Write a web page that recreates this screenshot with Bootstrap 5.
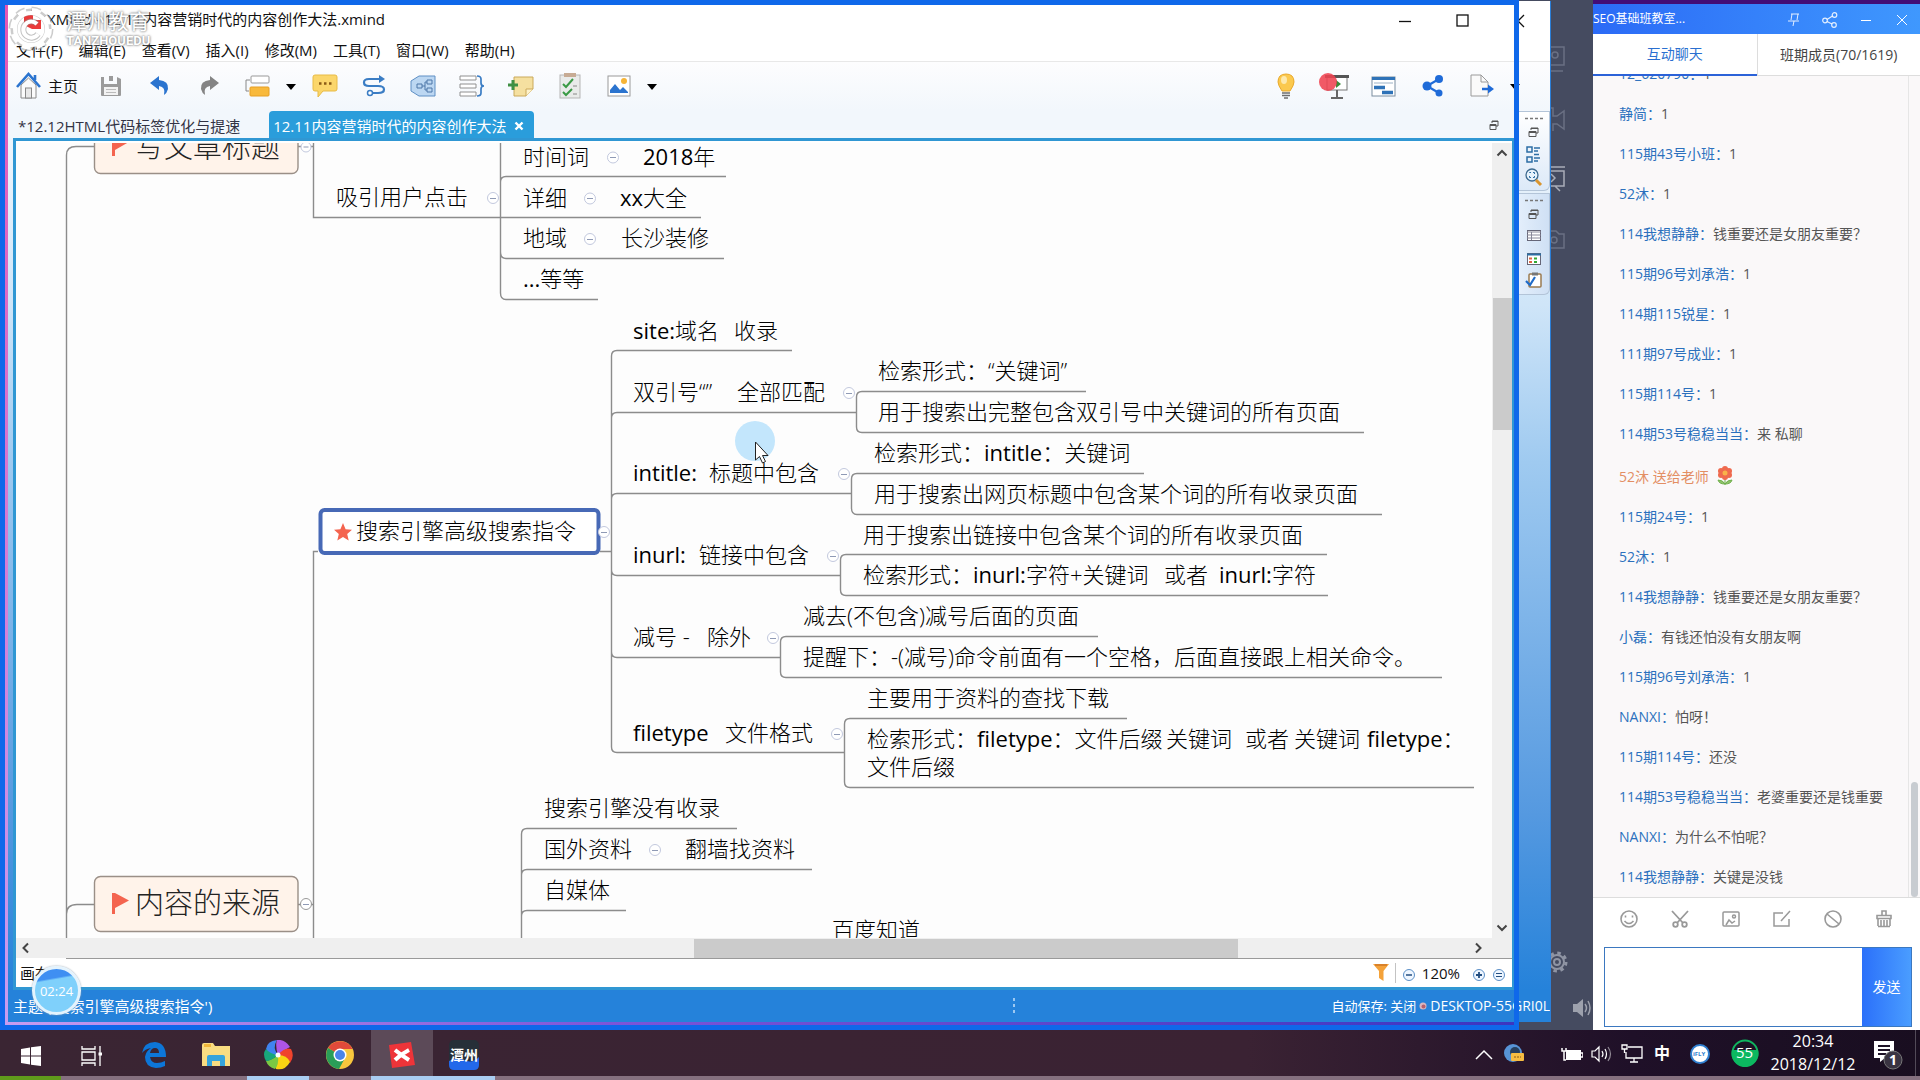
<!DOCTYPE html>
<html lang="zh-CN">
<head>
<meta charset="utf-8">
<meta name="viewport" content="width=device-width, initial-scale=1">
<title>XMind - 12.11内容营销时代的内容创作大法.xmind</title>
<link href="https://cdn.jsdelivr.net/npm/bootstrap@5.3.0/dist/css/bootstrap.min.css" rel="stylesheet">
<style>
:root{--ui:"Open Sans","Noto Sans CJK SC",sans-serif;--rec:#0f68ea;--frame:#3097d3}
body{font-family:var(--ui);font-size:15px;line-height:20px;color:#111;background:#454b60}
button,textarea{font-family:inherit}
.desk{height:100vh;overflow:hidden}
.fill-y{min-height:0}
.fill-x{min-width:0}
.plain{border:0;background:none;padding:0;color:inherit;font-size:inherit;line-height:inherit}
/* mind map window */
.xm-wrap{min-width:0;padding:1px 0 8px 8px}
.xm-win{background:#fff;border-right:1px solid #2b7fd8}
.xm-title,.xm-menu,.xm-tools,.xm-tabs,.hbar,.sheet,.xm-status,.chat-head,.chat-tabs,.chat-tools,.chat-send,.taskbar{flex:none}
.xm-title{height:38px;padding-left:39px;padding-bottom:2px}
.xm-wc{width:58px;height:36px}
.xm-menu{height:23px;padding-left:8px;gap:16px;border-bottom:1px solid #e8e8e8}
.xm-tools{height:49px;padding:0 26px 2px 8px;background:linear-gradient(#fdfdfe,#f2f7fc)}
.tool{width:49px;height:40px}
.tool-home{width:70px;gap:6px}
.tool-drop{width:18px;height:40px}
.xm-body{background:linear-gradient(#f3f8fd 0,#cfe5f8 22%,#9fcaf0 40%,#5599e0 80%,#2582da 100%)}
.xm-left{padding:0 4px 0 5px;min-width:0}
.xm-tabs{height:27px;background:#f2f7fc;margin-left:-5px;padding-left:10px}
.xm-tab{height:27px;padding-top:2px;color:#334;text-decoration:none}
.xm-tab.on{background:#2a9ddb;color:#fff;padding-right:10px;padding-left:4px;margin-left:29px;border-radius:4px 4px 0 0}
.xm-edit{border:3px solid var(--frame);background:#fff;padding-top:2px}
.canvas-box{overflow:hidden;background:#fdfdfd}
.canvas-box svg{display:block}
.vbar{width:20px;background:#efefef}
.vbar-thumb{height:132px;margin-top:135px;background:#cbcbcb;width:19px}
.hbar{height:20px;background:#efefef}
.hbar-thumb{width:544px;height:19px;background:#cbcbcb;margin-left:44%}
.sheet{height:29px}
.sheet-tab{width:50px;padding-left:4px}
.sheet-rest{border-top:1px solid #9a9a9a;gap:6px;padding-right:6px}
.zoom-value{margin-right:6px}
.xm-side{width:31px}
.trim{border:1px solid #b3c4d8;border-left:0;border-radius:0 0 6px 0;background:linear-gradient(90deg,#e3eefb,#cfe0f4);width:31px;margin-bottom:2px}
.trim svg{display:block}
.trim-a{height:80px;background:linear-gradient(#fff,#dce9f8)}
.trim-b{height:102px}
.xm-status{height:32px;background:#2582da;color:#fff;padding-left:5px}
.status-l{width:65%}
.status-r{font-size:13px;gap:3px}
.status-host{font-size:14px}
.rec-frame{inset:0 32px 0 0;border:5px solid var(--rec);pointer-events:none}
.rec-frame::before{content:"";position:absolute;left:0;top:0;bottom:0;width:3px;background:linear-gradient(#e457b4,#c79cf0)}
.rec-frame::after{content:"";position:absolute;left:0;right:0;bottom:0;height:3px;background:linear-gradient(90deg,#c79cf0,#7d55d8 40%,#3c35c0)}
.mark-logo{left:8px;top:5px}
.mark-text{left:66px;top:8px;color:#fff;text-shadow:0 0 2px #777,0 0 3px #999}
.mark-cn{font-size:21px;line-height:26px}
.mark-en{font-size:13px;line-height:14px;font-family:Roboto,sans-serif;font-weight:700}
.timer{left:32px;top:966px;width:49px;height:49px;border:3px solid #e4f3fd;border-radius:50%;color:#fff;font-size:13px;background:linear-gradient(170deg,#3f8ff2 0 24%,#7fd0fb 28% 100%);box-shadow:0 0 2px #89a}
/* mind map drawing */
.topic{font-size:22px;fill:#000;font-weight:300}
.topic-main{font-size:29px;fill:#222}
.topic .latin{font-weight:400}
.wire{fill:none;stroke:#8c8c8c;stroke-width:1.4}
.cap{fill:#fff3ea;stroke:#9a8f87;stroke-width:1.4}
/* classroom sidebar strip */
.strip{width:42px;background:#454b60}
.strip svg{display:block}
/* chat */
.chat{width:327px;background:#fff;border-top:4px solid #420d76}
.chat-head{height:30px;background:linear-gradient(90deg,#2b6af6,#3f98fe);color:#fff;font-size:12px}
.chat-head .plain{width:36px;height:30px}
.chat-tabs{height:42px;font-size:14px;border-bottom:1px solid #ddd}
.chat-tabs a{color:#444;text-decoration:none;border-left:1px solid #ddd}
.chat-tabs a.on{color:#2a6fd0;border-left:0;border-bottom:2px solid #2b62d8;height:42px}
.chat-list{flex:1 1 0;background:#faf8f9;font-size:14px;overflow:hidden}
.chat-msgs{padding-left:26px;overflow:hidden}
.msg{height:40px;line-height:40px;white-space:nowrap;flex:none;color:#555}
.msg b{font-weight:400;color:#2b70bd}
.msg-gift{height:43px;color:#e38e63}
.msg-gift svg{margin-left:8px}
.chat-bar{width:12px;border-left:1px solid #e6e6e6;padding:0 2px}
.chat-bar div{width:7px;height:115px;border-radius:4px;background:#c8ccd1}
.chat-tools{height:50px;padding:0 11px;border-top:1px solid #ddd}
.chat-tools .plain{width:51px;height:40px}
.chat-send{margin:0 8px 3px 11px;height:80px;border:1px solid #3b78c0}
.chat-send textarea{border:0;resize:none;outline:0}
.chat-send .plain{width:49px;color:#fff;font-size:14px;background:linear-gradient(90deg,#2b70fa,#4a9dff)}
/* taskbar */
.taskbar{height:50px;background:linear-gradient(90deg,#3a2533 0,#3a2233 65%,#1f1028 85%,#190e20 100%);box-shadow:inset 0 -4px #85707f}
.tb{width:62px;height:50px}
.tb.run{box-shadow:inset 0 -4px #a9cdf2}
.tb.act{background:#5c4a58}
.tb.first{width:61px;box-shadow:inset 0 -4px #5f9a1b}
.tray{color:#fff;font-size:16px;line-height:23px;padding-bottom:4px}
.tray .plain{height:46px}
.w30{width:30px}
.clock{width:92px}
.tray-end{width:4px}
</style>
</head>
<body>
<div class="desk d-flex flex-column">
<div class="d-flex flex-grow-1 fill-y">

<div class="xm-wrap position-relative flex-grow-1 d-flex flex-column">
<div class="xm-win flex-grow-1 d-flex flex-column overflow-hidden">
  <div class="xm-title d-flex align-items-center">
    <span class="me-auto text-nowrap">XMind - 12.11内容营销时代的内容创作大法.xmind</span>
    <button class="plain xm-wc" aria-label="最小化"><svg width="12" height="12"><path d="M0 6.5H12" stroke="#111" stroke-width="1.3"/></svg></button>
    <button class="plain xm-wc" aria-label="最大化"><svg width="14" height="14"><rect x="1" y="1" width="11" height="11" fill="none" stroke="#111" stroke-width="1.3"/></svg></button>
    <button class="plain xm-wc text-end pe-4" aria-label="关闭"><svg width="12" height="14"><path d="M10 1L4 7L10 13M4 7H0" fill="none" stroke="#111" stroke-width="1.3"/></svg></button>
  </div>
  <div class="xm-menu d-flex align-items-center text-nowrap">
    <button class="plain">文件(F)</button><button class="plain">编辑(E)</button><button class="plain">查看(V)</button><button class="plain">插入(I)</button><button class="plain">修改(M)</button><button class="plain">工具(T)</button><button class="plain">窗口(W)</button><button class="plain">帮助(H)</button>
  </div>
  <div class="xm-tools d-flex align-items-center">
    <button class="plain tool-home d-flex align-items-center text-nowrap"><svg width="26" height="28" viewBox="0 0 26 28"><path d="M5 13V26H20V13L12.500 6Z" fill="#fbfbfb" stroke="#8a8a8a"/><path d="M1 15L12.500 2L24 15M19 3V8" fill="none" stroke="#2b74cf" stroke-width="2.600"/><rect x="9.500" y="16" width="6" height="10" fill="#e8e8e8" stroke="#8a8a8a"/></svg>主页</button>
    <button class="plain tool" aria-label="保存"><svg width="22" height="22" viewBox="0 0 22 22"><path d="M1 2H4V9H17V2L21 4V20Q21 21 20 21H2Q1 21 1 20Z" fill="#9b9b9b"/><rect x="9" y="1" width="4" height="5" fill="#9b9b9b"/><rect x="4" y="12" width="14" height="8" fill="#f2f2f2"/><path d="M6 14.500H16M6 17.500H16" stroke="#bbb"/></svg></button>
    <button class="plain tool" aria-label="撤销"><svg width="20" height="20" viewBox="0 0 20 20"><path d="M0 7L9 0V4Q19 5 18 13Q17 17 14 19Q16 11 9 10V14Z" fill="#2b74cf"/></svg></button>
    <button class="plain tool" aria-label="重做"><svg width="20" height="20" viewBox="0 0 20 20"><path d="M20 7L11 0V4Q1 5 2 13Q3 17 6 19Q4 11 11 10V14Z" fill="#848484"/></svg></button>
    <button class="plain tool" aria-label="主题"><svg width="26" height="22" viewBox="0 0 26 22"><rect x="6" y="1" width="18" height="7" rx="1" fill="#fff" stroke="#999"/><path d="M5 5H1V16H4" fill="none" stroke="#888"/><rect x="5" y="12" width="19" height="9" rx="1" fill="#f8b93c" stroke="#e69f25"/></svg></button>
    <button class="plain tool-drop" aria-label="更多主题"><svg width="10" height="6"><path d="M0 0H10L5 6Z"/></svg></button>
    <button class="plain tool" aria-label="备注标签"><svg width="26" height="24" viewBox="0 0 26 24"><path d="M3 1H23Q25 1 25 3V15Q25 17 23 17H11L6 23V17H3Q1 17 1 15V3Q1 1 3 1Z" fill="#fbd66b" stroke="#e8bb46"/><path d="M7 9.500H9.500M12 9.500H14.500M17 9.500H19.500" stroke="#8a5a16" stroke-width="2.500"/></svg></button>
    <button class="plain tool" aria-label="联系"><svg width="24" height="22" viewBox="0 0 24 22"><path d="M20 4H7Q2 4 2 7.500Q2 11 7 11H16Q22 11 22 14.500Q22 18 16 18H10" fill="none" stroke="#3b7dc4" stroke-width="2.200"/><path d="M17 0L23 4L17 8Z" fill="#3b7dc4"/><circle cx="8" cy="18" r="2.500" fill="#fff" stroke="#3b7dc4" stroke-width="1.500"/></svg></button>
    <button class="plain tool" aria-label="外框"><svg width="26" height="22" viewBox="0 0 26 22"><path d="M9 1H25V21H9L1 16V6Z" fill="#bcd7f2" stroke="#5e8fc4"/><path d="M7 9H12V13H7ZM17 5H22V9H17ZM17 13H22V17H17ZM12 11H15V7H17M15 11V15H17" fill="none" stroke="#4c77a8"/></svg></button>
    <button class="plain tool" aria-label="概要"><svg width="26" height="22" viewBox="0 0 26 22"><path d="M1 1H17V5H1ZM1 9H17V13H1ZM1 17H17V21H1Z" fill="#fff" stroke="#909090"/><path d="M18 1Q22 1 22 4V8Q22 11 25 11Q22 11 22 14V18Q22 21 18 21" fill="none" stroke="#3b7dc4" stroke-width="1.700"/></svg></button>
    <button class="plain tool" aria-label="备注"><svg width="26" height="22" viewBox="0 0 26 22"><path d="M6 2H25V14L18 21H6Z" fill="#f5e0a0" stroke="#caa95a"/><path d="M25 14H18V21" fill="#fff3cc" stroke="#caa95a"/><path d="M5 5V15M0 10H10" stroke="#3f8f43" stroke-width="3"/></svg></button>
    <button class="plain tool" aria-label="任务"><svg width="22" height="26" viewBox="0 0 22 26"><rect x="1" y="2" width="20" height="23" fill="#e9ebea" stroke="#b5b5b5"/><rect x="5" y="0" width="12" height="4" fill="#c7ab94"/><path d="M4 11L7 14L14 6M4 19L7 22L13 16" fill="none" stroke="#3a9a45" stroke-width="2"/><path d="M14 13H18M14 21H18" stroke="#888"/></svg></button>
    <button class="plain tool" aria-label="图片"><svg width="24" height="22" viewBox="0 0 24 22"><rect x="1" y="1" width="22" height="20" fill="#fff" stroke="#9a9a9a"/><path d="M3 18V15L8 9L13 15L16 12L21 17V18Z" fill="#2b74cf"/><circle cx="17" cy="6" r="3" fill="#f6b436"/></svg></button>
    <button class="plain tool-drop me-auto" aria-label="更多图片"><svg width="10" height="6"><path d="M0 0H10L5 6Z"/></svg></button>
    <button class="plain tool" aria-label="头脑风暴"><svg width="20" height="26" viewBox="0 0 20 26"><path d="M10 1Q18 1 18 9Q18 12 14 18H6Q2 12 2 9Q2 1 10 1Z" fill="#fbc94e" stroke="#e9a92c"/><ellipse cx="8" cy="7" rx="3" ry="4" fill="#fde9ad"/><path d="M6 20H14M6 22.500H14M8 25H12" stroke="#6d6d6d" stroke-width="1.600"/></svg></button>
    <button class="plain tool" aria-label="演示"><svg width="32" height="28" viewBox="0 0 32 28"><rect x="8" y="5" width="20" height="13" fill="#fff" stroke="#777"/><path d="M6 4.500H30" stroke="#555" stroke-width="3"/><path d="M18 18V25M12 26H24" stroke="#666" stroke-width="2"/><path d="M17 8L22 12L17 16Z" fill="#3a8a3a"/><ellipse cx="9" cy="10" rx="9" ry="9" fill="#ef4351" fill-opacity=".88"/></svg></button>
    <button class="plain tool" aria-label="甘特图"><svg width="25" height="21" viewBox="0 0 25 21"><rect x="1" y="1" width="23" height="19" fill="#fff" stroke="#7a8ea0"/><path d="M1 2.500H24" stroke="#2f73b8" stroke-width="3"/><path d="M3 7H22" stroke="#9cb2c6"/><path d="M3 11.500H14M11 16.500H22" stroke="#2f73b8" stroke-width="3.500"/></svg></button>
    <button class="plain tool" aria-label="分享"><svg width="22" height="22" viewBox="0 0 22 22"><path d="M17 4L5 11L17 18" fill="none" stroke="#1f6bd8" stroke-width="2.200"/><circle cx="17" cy="4" r="4" fill="#1f6bd8"/><circle cx="5" cy="11" r="4.500" fill="#1f6bd8"/><circle cx="17" cy="18" r="3.500" fill="#1f6bd8"/></svg></button>
    <button class="plain tool" aria-label="导出"><svg width="26" height="24" viewBox="0 0 26 24"><path d="M2 1H12L19 8V22H2Z" fill="#fafafa" stroke="#9a9a9a"/><path d="M12 1V8H19" fill="none" stroke="#9a9a9a"/><path d="M13 15H20" stroke="#1f6bd8" stroke-width="2.500"/><path d="M19 10.500L25 15L19 19.500Z" fill="#1f6bd8"/></svg></button>
    <button class="plain tool-drop" aria-label="更多导出"><svg width="10" height="6"><path d="M0 0H10L5 6Z"/></svg></button>
  </div>
  <div class="xm-body flex-grow-1 d-flex fill-y">
    <div class="xm-left flex-grow-1 d-flex flex-column">
      <nav class="xm-tabs d-flex align-items-center text-nowrap">
        <a href="#" class="xm-tab d-flex align-items-center">*12.12HTML代码标签优化与提速</a>
        <a href="#" class="xm-tab on d-flex align-items-center gap-2">12.11内容营销时代的内容创作大法<svg width="10" height="10"><path d="M1.500 1.500L8.500 8.500M8.500 1.500L1.500 8.500" stroke="#fff" stroke-width="2.400"/></svg></a>
        <svg class="ms-auto me-3" width="10" height="10"><path d="M3 3V1H9V6H7M1 4.500H7V9.500H1ZM1 5.500H7M3 1.500H9" fill="none" stroke="#555"/></svg>
      </nav>
      <div class="xm-edit flex-grow-1 d-flex flex-column overflow-hidden">
        <div class="d-flex flex-grow-1 fill-y">
          <div class="canvas-box flex-grow-1 fill-x">
<svg width="1475" height="795" viewBox="16 143 1475 795" role="img" aria-label="思维导图">
<g class="wire">
<path d="M66.500 938V155Q66.500 146.500 76 146.500H94M66.500 914Q66.500 904.500 77 904.500H94"/>
<path d="M298 146.500H313.500M313.500 143V217.500H701M298 904.500H313.500M600 551.500H611.500M318 551.500H313.500V938"/>
<path d="M500.500 143V293Q500.500 299.500 506 299.500H598M500.500 182Q500.500 176.500 506 176.500H726M500.500 252Q500.500 258.500 506 258.500H724"/>
<path d="M792 350.500H617Q611.500 350.500 611.500 356V747Q611.500 752.500 617 752.500H844M611.500 418Q611.500 412.500 617 412.500H856M611.500 499Q611.500 493.500 617 493.500H851M611.500 570Q611.500 575.500 617 575.500H840M611.500 652Q611.500 657.500 617 657.500H780"/>
<path d="M1086 391.500H862Q856.500 391.500 856.500 397V427Q856.500 432.500 862 432.500H1364"/>
<path d="M1144 473.500H857Q851.500 473.500 851.500 479V508Q851.500 514.500 857 514.500H1382"/>
<path d="M1327 554.500H846Q840.500 554.500 840.500 560V590Q840.500 595.500 846 595.500H1328"/>
<path d="M1098 636.500H786Q780.500 636.500 780.500 642V672Q780.500 677.500 786 677.500H1442"/>
<path d="M1127 718.500H850Q844.500 718.500 844.500 724V782Q844.500 787.500 850 787.500H1474"/>
<path d="M737 828.500H527Q521.500 828.500 521.500 834V938M521.500 875Q521.500 869.500 527 869.500H812M521.500 916Q521.500 910.500 527 910.500H626"/>
</g>
<rect class="cap" x="94.500" y="118" width="203.500" height="55.500" rx="6"/>
<rect class="cap" x="94.500" y="876.500" width="203.500" height="55" rx="6"/>
<g fill="#f4644f"><path d="M112 135H115V156H112ZM115 135L128 142.500L115 150Z"/><path d="M112 893H115V914H112ZM115 893L129 900.500L115 908Z"/></g>
<g class="topic topic-main"><text x="135" y="158">写文章标题</text><text x="135" y="914">内容的来源</text></g>
<rect x="320.500" y="510" width="278" height="43" rx="4" fill="#fff" stroke="#4769b6" stroke-width="4"/>
<path d="M343 523L345.600 529.300L352 529.800L347.200 534L348.700 540.500L343 537L337.300 540.500L338.800 534L334 529.800L340.400 529.300Z" fill="#f4644f"/>
<g fill="#fff" stroke="#c3c9de">
<circle cx="306" cy="147" r="5"/><circle cx="493" cy="198" r="5.500"/><circle cx="613" cy="157.500" r="5.500"/><circle cx="590" cy="198.500" r="5.500"/><circle cx="590" cy="239" r="5.500"/><circle cx="849" cy="393" r="5.500"/><circle cx="844" cy="474" r="5.500"/><circle cx="833" cy="556" r="5.500"/><circle cx="773" cy="638" r="5.500"/><circle cx="837" cy="734" r="5.500"/><circle cx="604" cy="532" r="5.500"/><circle cx="655" cy="850" r="5.500"/><circle cx="306" cy="904" r="5.500" stroke="#999"/>
<path stroke="#8f9ab5" d="M303.500 147H308.500M490 198.500H496M610 157.500H616M587 198.500H593M587 239.500H593M846 393.500H852M841 474.500H847M830 556.500H836M770 638.500H776M834 734.500H840M601 532.500H607M652 850.500H658M303 904.500H309"/>
</g>
<circle cx="755" cy="441" r="20" fill="#c3e6fc"/>
<g class="topic">
<text x="336" y="205">吸引用户点击</text>
<text x="523" y="165">时间词</text><text x="643" y="165"><tspan class="latin">2018</tspan>年</text>
<text x="523" y="206">详细</text><text x="620" y="206"><tspan class="latin">xx</tspan>大全</text>
<text x="523" y="246">地域</text><text x="621" y="246">长沙装修</text>
<text x="523" y="287"><tspan class="latin">...</tspan>等等</text>
<text x="356" y="539">搜索引擎高级搜索指令</text>
<text x="633" y="339"><tspan class="latin">site:</tspan>域名</text><text x="734" y="339">收录</text>
<text x="633" y="400">双引号“”</text><text x="737" y="400">全部匹配</text>
<text x="633" y="481" class="latin">intitle:</text><text x="709" y="481">标题中包含</text>
<text x="633" y="563" class="latin">inurl:</text><text x="699" y="563">链接中包含</text>
<text x="633" y="645">减号 -</text><text x="707" y="645">除外</text>
<text x="633" y="741" class="latin">filetype</text><text x="725" y="741">文件格式</text>
<text x="878" y="379">检索形式：“关键词”</text><text x="878" y="420">用于搜索出完整包含双引号中关键词的所有页面</text>
<text x="874" y="461">检索形式：<tspan class="latin">intitle</tspan>：关键词</text><text x="874" y="502">用于搜索出网页标题中包含某个词的所有收录页面</text>
<text x="863" y="543">用于搜索出链接中包含某个词的所有收录页面</text>
<text x="863" y="583">检索形式：<tspan class="latin">inurl:</tspan>字符+关键词</text><text x="1164" y="583">或者</text><text x="1219" y="583"><tspan class="latin">inurl:</tspan>字符</text>
<text x="803" y="624">减去(不包含)减号后面的页面</text><text x="803" y="665">提醒下：-(减号)命令前面有一个空格，后面直接跟上相关命令。</text>
<text x="867" y="706">主要用于资料的查找下载</text>
<text x="867" y="747">检索形式：<tspan class="latin">filetype</tspan>：文件后缀</text><text x="1166" y="747">关键词</text><text x="1245" y="747">或者</text><text x="1294" y="747">关键词</text><text x="1367" y="747"><tspan class="latin">filetype</tspan>：</text><text x="867" y="775">文件后缀</text>
<text x="544" y="816">搜索引擎没有收录</text><text x="544" y="857">国外资料</text><text x="685" y="857">翻墙找资料</text><text x="544" y="898">自媒体</text><text x="832" y="938">百度知道</text>
</g>
<path d="M755.500 442V460L759.500 456.500L762.500 463L765.500 461.500L762.500 455.500H768Z" fill="#fff" stroke="#222"/>
</svg>
          </div>
          <div class="vbar d-flex flex-column align-items-end">
            <svg width="20" height="20"><path d="M5.500 12.500L10 8L14.500 12.500" fill="none" stroke="#444" stroke-width="2"/></svg>
            <div class="vbar-thumb mb-auto"></div>
            <svg width="20" height="20"><path d="M5.500 7.500L10 12L14.500 7.500" fill="none" stroke="#444" stroke-width="2"/></svg>
          </div>
        </div>
        <div class="hbar d-flex align-items-center">
          <svg width="20" height="20"><path d="M12 5.500L7.500 10L12 14.500" fill="none" stroke="#444" stroke-width="2"/></svg>
          <div class="hbar-thumb"></div>
          <svg class="ms-auto me-4" width="20" height="20"><path d="M8 5.500L12.500 10L8 14.500" fill="none" stroke="#444" stroke-width="2"/></svg>
        </div>
        <div class="sheet d-flex">
          <button class="plain sheet-tab text-start text-nowrap">画布 1</button>
          <div class="sheet-rest flex-grow-1 d-flex align-items-center justify-content-end">
            <svg width="16" height="20" viewBox="0 0 16 20"><path d="M0 1H16L10.500 8V18L6 15V8Z" fill="#f4a23a"/><path d="M2 2H14" stroke="#d9822a" stroke-width="2"/></svg>
            <div class="vr my-1"></div>
            <button class="plain" aria-label="缩小"><svg width="14" height="14"><circle cx="7" cy="7" r="5.500" fill="#eef6ff" stroke="#5b8fc7"/><path d="M4 7H10" stroke="#234e80" stroke-width="1.500"/></svg></button>
            <span class="zoom-value">120%</span>
            <button class="plain" aria-label="放大"><svg width="14" height="14"><circle cx="7" cy="7" r="5.500" fill="#eef6ff" stroke="#5b8fc7"/><path d="M4 7H10M7 4V10" stroke="#234e80" stroke-width="1.800"/></svg></button>
            <button class="plain" aria-label="适合大小"><svg width="14" height="14"><circle cx="7" cy="7" r="5.500" fill="#eef6ff" stroke="#5b8fc7"/><path d="M4 5.500H10M4 8.500H10" stroke="#234e80"/></svg></button>
          </div>
        </div>
      </div>
    </div>
    <div class="xm-side">
      <div class="trim trim-a"><svg width="28" height="78" viewBox="0 0 28 78"><path d="M6 6.500H24" stroke="#777" stroke-width="1.500" stroke-dasharray="3 2"/><path d="M12 18V16H19V21H17M10 19.500H17V24.500H10ZM10 20.500H17M12 16.500H19" fill="none" stroke="#555"/><path d="M8 35H13V40H8ZM8 45H13V50H8ZM15 36H21M15 39H19M15 46H21M15 49H19M15 42.500H20" fill="none" stroke="#2d6ea5" stroke-width="1.500"/><circle cx="13" cy="63" r="6" fill="#e6f2fc" stroke="#3d6a8f" stroke-width="1.300"/><path d="M10.500 61V60.500H12M14 60.500H15.500V62M10.500 64V65.500H12M14 65.500H15.500V64" fill="none" stroke="#2d6ea5"/><path d="M17 68L22 73" stroke="#d9952f" stroke-width="3"/></svg></div>
      <div class="trim trim-b"><svg width="28" height="100" viewBox="0 0 28 100"><path d="M6 6.500H24" stroke="#777" stroke-width="1.500" stroke-dasharray="3 2"/><path d="M12 18V16H19V21H17M10 19.500H17V24.500H10ZM10 20.500H17M12 16.500H19" fill="none" stroke="#555"/><rect x="8.500" y="36.500" width="13" height="10" fill="#fff" stroke="#667"/><path d="M8 38H22M8 41H22M8 44H22M12.500 38V46" stroke="#889"/><rect x="8.500" y="59.500" width="13" height="11" fill="#fff" stroke="#667"/><path d="M8 60.500H22" stroke="#2d6ea5" stroke-width="2"/><path d="M10 64.500H13M10 68H13" stroke="#d64" stroke-width="2"/><path d="M15 64.500H18M15 68H18" stroke="#3a3" stroke-width="2"/><rect x="10" y="80" width="12" height="13" rx="1" fill="#fff" stroke="#9a7b50" stroke-width="1.500"/><path d="M13 80H19" stroke="#777" stroke-width="3"/><path d="M7 87L11 91L16 83" fill="none" stroke="#1f6bc8" stroke-width="2.200"/></svg></div>
    </div>
  </div>
  <div class="xm-status d-flex align-items-center text-nowrap">
    <span class="status-l">主题 ('搜索引擎高级搜索指令')</span>
    <svg width="4" height="18"><path d="M2 1V18" stroke="#9cc8f2" stroke-width="2" stroke-dasharray="3 3"/></svg>
    <div class="status-r ms-auto d-flex align-items-center"><span>自动保存: 关闭</span><svg width="8" height="8"><circle cx="4" cy="4" r="3.500" fill="#d9b6c0"/><circle cx="4.500" cy="4.500" r="2" fill="#b5606c"/></svg><span class="status-host">DESKTOP-55GRI0L</span></div>
  </div>
</div>
<div class="rec-frame position-absolute"></div>
<svg class="mark-logo position-absolute" width="46" height="46" viewBox="0 0 46 46"><path d="M16 9L25 5V15H33V24H24L16 20Z" fill="#ea3a3a"/><circle cx="23" cy="24" r="17" fill="none" stroke="#999" stroke-opacity=".5" stroke-width="7"/><circle cx="23" cy="24" r="20" fill="none" stroke="#aaa" stroke-opacity=".6" stroke-width="5" stroke-dasharray="9 6.700"/><circle cx="23" cy="24" r="19" fill="none" stroke="#fff" stroke-width="4" stroke-dasharray="9 6"/><circle cx="23" cy="24" r="16" fill="none" stroke="#fff" stroke-width="4"/><path d="M29 19A8 8 0 1 0 30 29" fill="none" stroke="#888" stroke-width="6" stroke-opacity=".5"/><path d="M29 19A8 8 0 1 0 30 29" fill="none" stroke="#fff" stroke-width="4"/></svg>
<div class="mark-text position-absolute"><div class="mark-cn">潭州教育</div><div class="mark-en">TANZHOUEDU</div></div>
<div class="timer position-absolute d-flex align-items-center justify-content-center">02:24</div>
</div>

<div class="strip">
<svg width="42" height="1030" viewBox="1551 0 42 1030" fill="none" stroke="#6a7083" stroke-width="1.500"><path d="M1551 47H1564V65H1551M1551 71H1563"/><circle cx="1555" cy="55" r="3"/><path d="M1551 108H1553V116H1557L1564 111V129L1557 124H1553V131"/><path d="M1551 167H1565M1551 171H1564V186H1551M1555 186L1560 191M1551 174L1555 178L1551 182" stroke="#a9adb8"/><path d="M1551 231H1556L1559 234H1564V248H1551"/><circle cx="1554" cy="240" r="3"/><circle cx="1557" cy="962" r="3" stroke="#8f94a3" stroke-width="2"/><circle cx="1557" cy="962" r="7" stroke="#8f94a3" stroke-width="2"/><circle cx="1557" cy="962" r="9" stroke="#8f94a3" stroke-width="3" stroke-dasharray="3.500 3.570"/><path d="M1573 1004H1577L1583 999V1017L1577 1012H1573Z" fill="#9da1ad" stroke="none"/><path d="M1585 1004Q1588 1008 1585 1012M1588 1001Q1592 1008 1588 1015" stroke="#9da1ad"/></svg>
</div>

<section class="chat d-flex flex-column">
  <div class="chat-head d-flex align-items-center">
    <span class="me-auto">SEO基础班教室...</span>
    <button class="plain" aria-label="置顶"><svg width="14" height="14" viewBox="0 0 14 14" fill="none" stroke="#fff" stroke-opacity=".85"><path d="M4 1H12M5 1L4 7M11 1L10 7M1 8H12M7 8L6 13"/></svg></button>
    <button class="plain" aria-label="分享"><svg width="16" height="16" viewBox="0 0 16 16" fill="none" stroke="#fff" stroke-opacity=".85" stroke-width="1.200"><circle cx="3" cy="8.500" r="2.300"/><circle cx="12.500" cy="3" r="2.300"/><circle cx="12" cy="13" r="2.300"/><path d="M5 7.500L10.500 4M5 9.500L10 12"/></svg></button>
    <button class="plain" aria-label="最小化"><svg width="10" height="10"><path d="M0 5.500H10" stroke="#fff"/></svg></button>
    <button class="plain" aria-label="关闭"><svg width="12" height="12"><path d="M1 1L11 11M11 1L1 11" stroke="#fff"/></svg></button>
  </div>
  <nav class="chat-tabs d-flex">
    <a href="#" class="on w-50 d-flex align-items-center justify-content-center">互动聊天</a>
    <a href="#" class="w-50 d-flex align-items-center justify-content-center">班期成员(70/1619)</a>
  </nav>
  <div class="chat-list d-flex">
    <div class="chat-msgs flex-grow-1 d-flex flex-column justify-content-end">
      <div class="msg"><b>12_620790：</b>1</div>
      <div class="msg"><b>静简：</b>1</div>
      <div class="msg"><b>115期43号小班：</b>1</div>
      <div class="msg"><b>52沐：</b>1</div>
      <div class="msg"><b>114我想静静：</b>钱重要还是女朋友重要？</div>
      <div class="msg"><b>115期96号刘承浩：</b>1</div>
      <div class="msg"><b>114期115锐星：</b>1</div>
      <div class="msg"><b>111期97号成业：</b>1</div>
      <div class="msg"><b>115期114号：</b>1</div>
      <div class="msg"><b>114期53号稳稳当当：</b>来 私聊</div>
      <div class="msg msg-gift d-flex align-items-end"><span>52沐 送给老师</span><svg class="align-self-center" width="16" height="20" viewBox="0 0 16 20"><path d="M8 10V19M8 18Q2 18 1 14Q6 14 8 18Q10 14 15 14Q14 18 8 18" fill="#8fc46a" stroke="#6faf4c"/><g fill="#ef6a4f"><circle cx="8" cy="3" r="3"/><circle cx="8" cy="11" r="3"/><circle cx="4" cy="5" r="3"/><circle cx="12" cy="5" r="3"/><circle cx="4" cy="9" r="3"/><circle cx="12" cy="9" r="3"/></g><circle cx="8" cy="7" r="2.500" fill="#f9b24a"/></svg></div>
      <div class="msg"><b>115期24号：</b>1</div>
      <div class="msg"><b>52沐：</b>1</div>
      <div class="msg"><b>114我想静静：</b>钱重要还是女朋友重要？</div>
      <div class="msg"><b>小磊：</b>有钱还怕没有女朋友啊</div>
      <div class="msg"><b>115期96号刘承浩：</b>1</div>
      <div class="msg"><b>NANXI：</b>怕呀！</div>
      <div class="msg"><b>115期114号：</b>还没</div>
      <div class="msg"><b>114期53号稳稳当当：</b>老婆重要还是钱重要</div>
      <div class="msg"><b>NANXI：</b>为什么不怕呢？</div>
      <div class="msg"><b>114我想静静：</b>关键是没钱</div>
    </div>
    <div class="chat-bar d-flex align-items-end"><div></div></div>
  </div>
  <div class="chat-tools d-flex justify-content-between">
    <button class="plain" aria-label="表情"><svg width="20" height="20" viewBox="0 0 20 20" fill="none" stroke="#999" stroke-width="1.600"><circle cx="10" cy="10" r="8"/><path d="M5.500 12Q10 17 14.500 12M6.500 6.500V8.500M13.500 6.500V8.500"/></svg></button>
    <button class="plain" aria-label="截图"><svg width="20" height="20" viewBox="0 0 20 20" fill="none" stroke="#999" stroke-width="1.800"><path d="M2 2L13 14M18 2L7 14"/><circle cx="5.500" cy="15.500" r="2.300"/><circle cx="14.500" cy="15.500" r="2.300"/></svg></button>
    <button class="plain" aria-label="图片"><svg width="20" height="20" viewBox="0 0 20 20" fill="none" stroke="#999" stroke-width="1.500"><rect x="2" y="3" width="16" height="14" rx="1"/><path d="M5 16L8 11L11 14L14 12"/><circle cx="13" cy="7.500" r="1.500"/></svg></button>
    <button class="plain" aria-label="编辑"><svg width="20" height="20" viewBox="0 0 20 20" fill="none" stroke="#999" stroke-width="1.500"><path d="M11 4H2V17H17V10M9 12L18 2"/></svg></button>
    <button class="plain" aria-label="禁言"><svg width="20" height="20" viewBox="0 0 20 20" fill="none" stroke="#999" stroke-width="1.600"><circle cx="10" cy="10" r="8"/><path d="M4 5L16 15"/></svg></button>
    <button class="plain" aria-label="清屏"><svg width="20" height="20" viewBox="0 0 20 20" fill="none" stroke="#999" stroke-width="1.600"><path d="M8 6V2H12V6M3 6.500H17V9.500H3ZM4 10V17M7 11V17M10 11V17M13 11V17M16 10V17M4 17.500H16"/></svg></button>
  </div>
  <div class="chat-send d-flex">
    <textarea class="flex-grow-1 fill-x" aria-label="聊天内容"></textarea>
    <button class="plain">发送</button>
  </div>
</section>
</div>

<footer class="taskbar d-flex">
  <button class="plain tb first" aria-label="开始"><svg width="20" height="20" viewBox="0 0 20 20" fill="#fff"><path d="M0 3L9 1.500V9.500H0ZM10 1.300L20 0V9.500H10ZM0 10.500H9V18.500L0 17ZM10 10.500H20V20L10 18.700Z"/></svg></button>
  <button class="plain tb" aria-label="任务视图"><svg width="22" height="20" viewBox="0 0 22 20" fill="none" stroke="#fff" stroke-width="1.300"><path d="M1 0V3H14V0M1 6H14V14H1ZM1 20V17H14V20M19 0V20"/><path d="M17.500 8H21" stroke-width="3"/></svg></button>
  <button class="plain tb" aria-label="Edge"><svg width="26" height="28" viewBox="0 0 26 28"><path d="M1 12Q3 1 14 1Q25 2 25 16H9Q10 22 16 22Q20 22 24 20V25Q20 27 15 27Q4 26 4 16Q5 10 10 7Q4 8 1 12ZM9 12H18Q18 7 14 7Q10 7 9 12Z" fill="#0d76d8"/></svg></button>
  <button class="plain tb" aria-label="文件资源管理器"><svg width="28" height="24" viewBox="0 0 28 24"><path d="M0 2Q0 0 2 0H11L13 3H28V23H0Z" fill="#f9dd82"/><path d="M2 1H9V4H2Z" fill="#f0b73b"/><path d="M5 23V14Q5 12 7 12H21Q23 12 23 14V23H18V18H10V23Z" fill="#35a4dc"/></svg></button>
  <button class="plain tb run" aria-label="浏览器"><svg width="30" height="30" viewBox="0 0 30 30"><path d="M15 15Q9 8 14 0Q4 1 3 9Q6 16 15 15Z" fill="#3f83ef"/><path d="M15 15Q12 6 14 0Q22 -1 27 7Q23 9 15 15Z" fill="#ad55e6"/><path d="M15 15Q22 7 28 9Q32 16 27 23Q24 16 15 15Z" fill="#f0432c"/><path d="M15 15Q24 15 27 22Q22 31 13 29Q12 20 15 15Z" fill="#f8d413"/><path d="M15 15Q16 25 12 29Q5 27 3 21Q9 20 15 15Z" fill="#7ac943"/><path d="M15 15Q8 21 3 21Q-1 14 3 9Q7 14 15 15Z" fill="#18a77b"/><circle cx="15" cy="15" r="2.500" fill="#fff"/></svg></button>
  <button class="plain tb" aria-label="Chrome"><svg width="28" height="28" viewBox="0 0 28 28"><circle cx="14" cy="14" r="14" fill="#f8c63d"/><path d="M14 14L2 7A14 14 0 0 1 26.500 8H14Z" fill="#e04a3a"/><path d="M14 14L2 7A14 14 0 0 0 13 28L19 17Z" fill="#2a9e58"/><circle cx="14" cy="14" r="6.500" fill="#fff"/><circle cx="14" cy="14" r="5" fill="#4a84ea"/></svg></button>
  <button class="plain tb run act" aria-label="XMind"><svg width="26" height="26" viewBox="0 0 26 26"><path d="M0 3L22 0L26 23L3 26Z" fill="#ee3439"/><path d="M6 8Q12 13 20 18M20 8Q12 12 6 18" fill="none" stroke="#fff" stroke-width="4"/></svg></button>
  <button class="plain tb run" aria-label="潭州课堂"><svg width="30" height="30" viewBox="0 0 30 30"><rect width="30" height="30" rx="5" fill="#262f38"/><path d="M0 21Q8 16 15 20Q23 24 30 17V25Q30 30 25 30H5Q0 30 0 25Z" fill="#2368ea"/><text x="1" y="20" font-size="14" font-weight="700" fill="#fff">潭州</text></svg></button>
  <div class="tray ms-auto d-flex align-items-center">
    <button class="plain w30" aria-label="显示隐藏的图标"><svg width="18" height="12"><path d="M1 11L9 3L17 11" fill="none" stroke="#fff" stroke-width="1.500"/></svg></button>
    <button class="plain w30 me-4" aria-label="云同步"><svg width="22" height="22" viewBox="0 0 22 22"><circle cx="10" cy="10" r="9" fill="#5794d6"/><circle cx="12" cy="9" r="5" fill="#27405e"/><rect x="8" y="10" width="13" height="8" rx="1" fill="#f6bd42"/><path d="M11 14H18" stroke="#8a5b12" stroke-dasharray="2 1"/></svg></button>
    <button class="plain w30 ms-1" aria-label="电池"><svg width="22" height="16" viewBox="0 0 22 16"><rect x="5" y="4" width="15" height="10" fill="#fff"/><path d="M20 7H22V11H20M1 2V5H5V2M3 5V14H5" fill="none" stroke="#fff" stroke-width="1.500"/></svg></button>
    <button class="plain w30" aria-label="音量"><svg width="22" height="18" viewBox="0 0 22 18" fill="none" stroke="#fff" stroke-width="1.200"><path d="M1 6H4L8 2V16L4 12H1ZM11 6Q13 9 11 12M14 4Q17 9 14 14"/><path d="M17 2Q22 9 17 16" stroke-opacity=".5"/></svg></button>
    <button class="plain w30" aria-label="网络"><svg width="22" height="20" viewBox="0 0 22 20" fill="none" stroke="#fff" stroke-width="1.300"><path d="M7 3H21V14H5V8M13 14V18M9 18H17M1 1H6V5H1ZM3.500 5V9"/></svg></button>
    <button class="plain w30 fw-bold" aria-label="输入法">中</button>
    <button class="plain px-2 ms-1" aria-label="讯飞输入法"><svg width="22" height="22" viewBox="0 0 22 22"><circle cx="11" cy="11" r="9" fill="#fff" stroke="#2f7fd0" stroke-width="2"/><text x="4" y="13" font-size="6" font-weight="700" fill="#2f7fd0">iFLY</text></svg></button>
    <button class="plain px-2 ms-1" aria-label="安全卫士"><svg width="28" height="28" viewBox="0 0 28 28"><circle cx="14" cy="14" r="12.500" fill="#1d1226" stroke="#10b45f" stroke-width="2"/><path d="M1 11H27A13.500 13.500 0 1 1 1 11Z" fill="#0cb860"/><text x="5" y="19" font-size="15" fill="#fff">55</text></svg></button>
    <button class="plain clock text-center"><span class="d-block">20:34</span><span class="d-block">2018/12/12</span></button>
    <button class="plain ps-2 pe-2 ms-1" aria-label="通知"><svg width="36" height="34" viewBox="0 0 36 34"><path d="M3 5H23V22H14L9 26V22H3Z" fill="#fff"/><path d="M7 10H19M7 14H19M7 18H15" stroke="#1d1226" stroke-width="1.800"/><circle cx="22" cy="24" r="9" fill="#3a3442" stroke="#777"/><text x="18" y="29" font-size="14" font-weight="700" fill="#fff">1</text></svg></button>
    <div class="vr h-100"></div><span class="tray-end"></span>
  </div>
</footer>
</div>
<script src="https://cdn.jsdelivr.net/npm/bootstrap@5.3.0/dist/js/bootstrap.bundle.min.js"></script>
</body>
</html>
